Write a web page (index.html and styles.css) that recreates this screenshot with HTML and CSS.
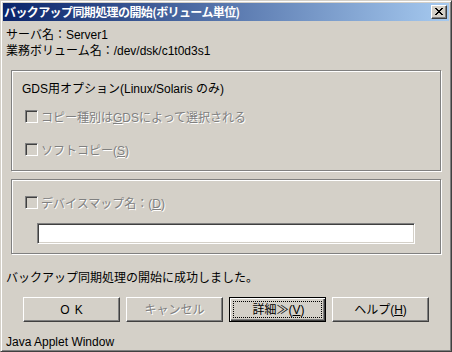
FILE: index.html
```html
<!DOCTYPE html>
<html>
<head>
    <title>バックアップ同期処理の開始</title>
    <meta charset="utf-8">
    <link rel="stylesheet" href="styles.css">
</head>
<body>
    <div class="window">
        <div class="titlebar">
            <span class="title">バックアップ同期処理の開始(ボリューム単位)</span>
            <div class="close-btn">
                <svg width="8" height="7" viewBox="0 0 8 7">
                    <path d="M0 0h2v1h-2zM6 0h2v1h-2zM1 1h2v1h-2zM5 1h2v1h-2zM2 2h4v1h-4zM3 3h2v1h-2zM2 4h4v1h-4zM1 5h2v1h-2zM5 5h2v1h-2zM0 6h2v1h-2zM6 6h2v1h-2z" fill="#000"/>
                </svg>
            </div>
        </div>

        <div class="content">
            <div class="info-line">サーバ名：Server1</div>
            <div class="info-line">業務ボリューム名：/dev/dsk/c1t0d3s1</div>

            <!-- GDS 옵션 -->
            <div class="group group-gds">
                <div class="group-title">GDS用オプション(Linux/Solaris のみ)</div>
                <div class="check-row">
                    <span class="checkbox"></span>
                    <span class="disabled-text">コピー種別は<u>G</u>DSによって選択される</span>
                </div>
                <div class="check-row">
                    <span class="checkbox"></span>
                    <span class="disabled-text">ソフトコピー(<u>S</u>)</span>
                </div>
            </div>

            <!-- 디바이스 맵 -->
            <div class="group group-map">
                <div class="check-row">
                    <span class="checkbox"></span>
                    <span class="disabled-text">デバイスマップ名：(<u>D</u>)</span>
                </div>
                <div class="text-field"></div>
            </div>

            <div class="message">バックアップ同期処理の開始に成功しました。</div>

            <div class="button-row">
                <div class="btn"><span class="ok-label">OK</span></div>
                <div class="btn"><span class="disabled-text">キャンセル</span></div>
                <div class="btn btn-default"><span class="focus-rect">詳細≫(<u>V</u>)</span></div>
                <div class="btn">ヘルプ(<u>H</u>)</div>
            </div>

            <div class="status">Java Applet Window</div>
        </div>
    </div>
</body>
</html>
```

FILE: styles.css
```css
* {
    margin: 0;
    padding: 0;
    box-sizing: border-box;
}

body {
    background: #d4d0c8;
    font-family: 'Liberation Sans', 'Noto Sans CJK JP', sans-serif;
    font-size: 12px;
    color: #000;
}

.window {
    width: 452px;
    height: 352px;
    background: #d4d0c8;
    border: 1px solid;
    border-color: #d4d0c8 #404040 #404040 #d4d0c8;
    box-shadow: inset 1px 1px #fff, inset -1px -1px #808080;
    padding: 2px;
}

.titlebar {
    height: 18px;
    background: linear-gradient(to right, #0a246a 0%, #a6caf0 100%);
    display: flex;
    align-items: center;
    justify-content: space-between;
    padding: 0 2px 0 1px;
}

.title {
    color: #fff;
    font-family: 'Noto Sans CJK JP', sans-serif;
    font-weight: bold;
    font-size: 12px;
    line-height: 16px;
    letter-spacing: -0.6px;
}

.close-btn {
    width: 16px;
    height: 14px;
    background: #d4d0c8;
    border: 1px solid;
    border-color: #fff #404040 #404040 #fff;
    box-shadow: inset -1px -1px #808080;
    display: flex;
    align-items: center;
    justify-content: center;
    padding-bottom: 1px;
}

.content {
    padding: 6px 3px 0 3px;
}

.info-line {
    line-height: 16px;
}

.group {
    width: 430px;
    margin-left: 5px;
    border: 1px solid #808080;
    box-shadow: inset 1px 1px #fff, 1px 1px #fff;
    padding-left: 10px;
}

.group-gds {
    margin-top: 11px;
    height: 101px;
    padding-top: 10px;
}

.group-map {
    margin-top: 8px;
    height: 75px;
    padding-top: 14px;
}

.group-title {
    line-height: 16px;
}

.check-row {
    display: flex;
    align-items: center;
    height: 16px;
    padding-left: 3px;
    gap: 3px;
}

.group-gds .check-row {
    margin-top: 11px;
}

.group-gds .check-row + .check-row {
    margin-top: 17px;
}

.checkbox {
    width: 13px;
    height: 13px;
    background: #d4d0c8;
    border: 1px solid;
    border-color: #808080 #fff #fff #808080;
    box-shadow: inset 1px 1px #404040, inset -1px -1px #d4d0c8;
}

.disabled-text {
    color: #808080;
    text-shadow: 1px 1px 0 #fff;
}

.text-field {
    width: 378px;
    height: 21px;
    margin: 13px 0 0 15px;
    background: #fff;
    border: 1px solid;
    border-color: #808080 #fff #fff #808080;
    box-shadow: inset 1px 1px #404040, inset -1px -1px #d4d0c8;
}

.message {
    line-height: 16px;
    margin-top: 16px;
}

.button-row {
    display: flex;
    justify-content: center;
    gap: 6px;
    margin-top: 11px;
}

.btn {
    width: 97px;
    height: 25px;
    background: #d4d0c8;
    border: 1px solid;
    border-color: #fff #404040 #404040 #fff;
    box-shadow: inset -1px -1px #808080;
    display: flex;
    align-items: center;
    justify-content: center;
    line-height: 14px;
}

.btn-default {
    border: 1px solid #000;
    box-shadow: inset 1px 1px #fff, inset -1px -1px #404040, inset -2px -2px #808080;
    padding: 3px;
}

.focus-rect {
    flex: 1;
    align-self: stretch;
    border: 1px dotted #000;
    display: flex;
    align-items: center;
    justify-content: center;
    padding-left: 2px;
}

.ok-label {
    letter-spacing: 5px;
    padding-left: 5px;
}

.status {
    line-height: 16px;
    margin-top: 12px;
    font-size: 12px;
}
```
